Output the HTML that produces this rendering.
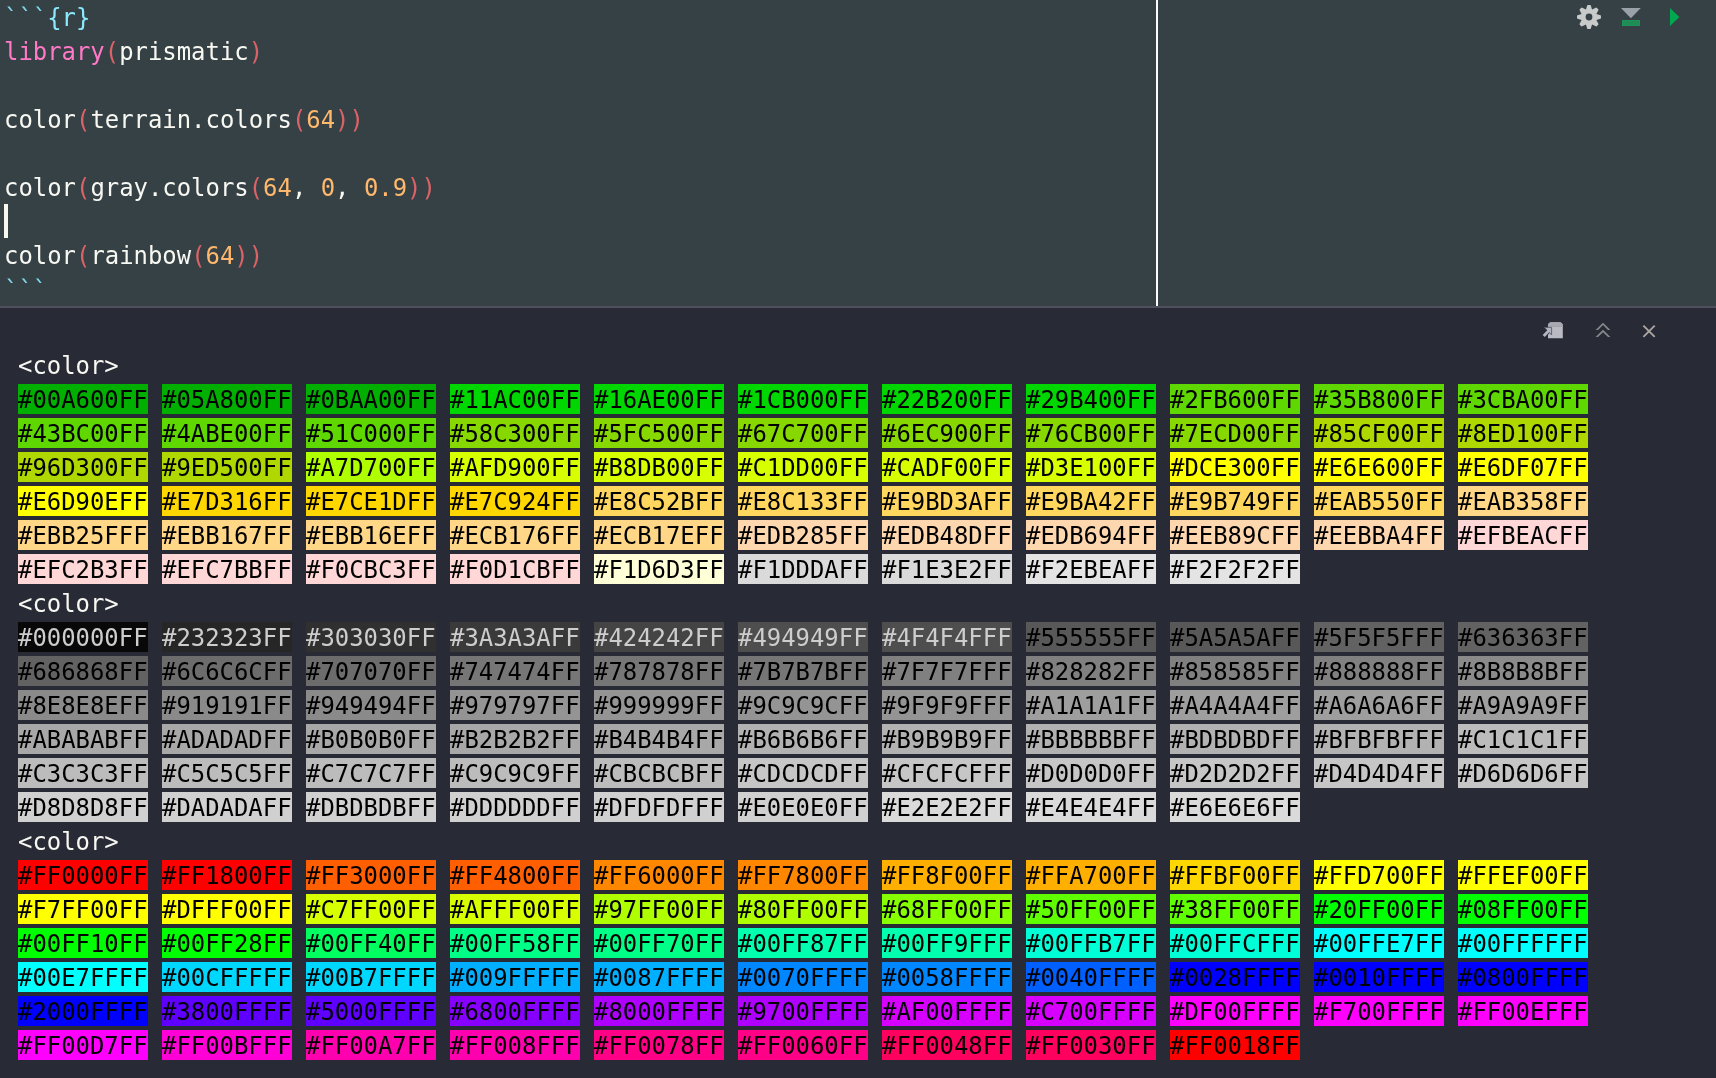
<!DOCTYPE html>
<html><head><meta charset="utf-8"><title>prismatic colors</title>
<style>
html,body{margin:0;padding:0;}
body{width:1716px;height:1078px;overflow:hidden;background:#282a36;position:relative;font-family:"DejaVu Sans Mono","Liberation Mono",monospace;}
#ed{position:absolute;left:0;top:0;width:1716px;height:306px;background:#364146;}
#hl{position:absolute;left:0;top:306px;width:1716px;height:2px;background:#50505c;}
#vl{position:absolute;left:1156px;top:0;width:2px;height:306px;background:#fcfcfc;}
#code{will-change:transform;position:absolute;left:4px;top:1px;margin:0;font-family:"DejaVu Sans Mono","Liberation Mono",monospace;font-size:23.92px;line-height:34px;color:#f8f8f2;white-space:pre;}
#code div{height:34px;}
.k{color:#ff79c6}.p{color:#db6368}.n{color:#ffb86c}.c{color:#8be9fd}.bt{color:#82dcef}
#cur{position:absolute;left:4px;top:204px;width:4px;height:34px;background:#f8f8f0;}
#out{will-change:transform;position:absolute;left:18px;top:349px;font-size:23.92px;line-height:34px;color:#f8f8f2;white-space:nowrap;}
.ln{height:34px;position:relative;}
.s{display:inline-block;box-sizing:border-box;width:130px;height:30px;margin:1px 14px 3px 0;padding-left:0;line-height:32px;color:#000;vertical-align:top;overflow:visible;}
.s.w{color:#cdcdcd}
svg{position:absolute;}
</style></head><body>
<div id="ed"></div><div id="vl"></div><div id="hl"></div>
<div id="code"><div><span class="bt">```</span><span class="c">{r}</span></div><div><span class="k">library</span><span class="p">(</span>prismatic<span class="p">)</span></div><div> </div><div>color<span class="p">(</span>terrain.colors<span class="p">(</span><span class="n">64</span><span class="p">))</span></div><div> </div><div>color<span class="p">(</span>gray.colors<span class="p">(</span><span class="n">64</span>, <span class="n">0</span>, <span class="n">0.9</span><span class="p">))</span></div><div> </div><div>color<span class="p">(</span>rainbow<span class="p">(</span><span class="n">64</span><span class="p">))</span></div><div><span class="bt">```</span></div></div>
<div id="cur"></div>
<svg id="gear" style="left:1571.7px;top:0px" width="34" height="34" viewBox="-17 -17 34 34"><g fill="#c9cbcb" stroke="#c9cbcb" stroke-width="1.5" stroke-linejoin="round"><circle r="7.7" stroke="none"/><polygon points="-2.3,-7.2 -1.1,-11.2 1.1,-11.2 2.3,-7.2"/><polygon points="-2.3,-7.2 -1.1,-11.2 1.1,-11.2 2.3,-7.2" transform="rotate(45)"/><polygon points="-2.3,-7.2 -1.1,-11.2 1.1,-11.2 2.3,-7.2" transform="rotate(90)"/><polygon points="-2.3,-7.2 -1.1,-11.2 1.1,-11.2 2.3,-7.2" transform="rotate(135)"/><polygon points="-2.3,-7.2 -1.1,-11.2 1.1,-11.2 2.3,-7.2" transform="rotate(180)"/><polygon points="-2.3,-7.2 -1.1,-11.2 1.1,-11.2 2.3,-7.2" transform="rotate(225)"/><polygon points="-2.3,-7.2 -1.1,-11.2 1.1,-11.2 2.3,-7.2" transform="rotate(270)"/><polygon points="-2.3,-7.2 -1.1,-11.2 1.1,-11.2 2.3,-7.2" transform="rotate(315)"/></g><circle r="3.4" fill="#364146"/></svg>
<svg style="left:1616px;top:4px" width="30" height="26" viewBox="1616 4 30 26"><polygon points="1621,8 1640.8,8 1630.9,18.2" fill="#9aa1a8"/><rect x="1622.5" y="20.5" width="17" height="5" fill="#208c55" stroke="#1e9357" stroke-width="1"/></svg>
<svg style="left:1666px;top:4px" width="18" height="26" viewBox="1666 4 18 26"><polygon points="1670,8 1679.3,17 1670,26.1" fill="#00a950"/></svg>
<svg style="left:1538px;top:316px" width="30" height="28" viewBox="1538 316 30 28"><path d="M1548 338.2 V325.8 a3.6 3.6 0 0 1 3.6 -3.6 h7.6 a3.6 3.6 0 0 1 3.6 3.6 V338.2 Z" fill="#b9bac2"/><path d="M1548 326.4 V325.8 a3.6 3.6 0 0 1 3.6 -3.6 h7.6 a3.6 3.6 0 0 1 3.6 3.6 V326.4 Z" fill="#a9aab1"/><rect x="1548" y="326.2" width="14.8" height="0.8" fill="#9fa0a8"/><path d="M1543.6 336 L1549.2 330.2" stroke="#282a36" stroke-width="4.6" fill="none"/><path d="M1544.4 327.4 h7.2 v7.6 z" fill="#b3b4c2" stroke="#5a5b68" stroke-width="0.9" stroke-linejoin="miter"/><path d="M1543.7 336 L1549.2 330.2" stroke="#b3b4c2" stroke-width="2.9" fill="none"/></svg>
<svg style="left:1592px;top:318px" width="22" height="24" viewBox="1592 318 22 24"><g fill="#87878c"><polygon points="1603,322.7 1610.4,330 1608,330 1603,325.1 1598,330 1595.6,330"/><polygon points="1603,329.8 1610.4,337.1 1608,337.1 1603,332.2 1598,337.1 1595.6,337.1"/></g></svg>
<svg style="left:1638px;top:320px" width="22" height="22" viewBox="1638 320 22 22"><path d="M1643.4 325.6 L1654.7 336.8 M1654.7 325.6 L1643.4 336.8" fill="none" stroke="#aaa5a0" stroke-width="1.9"/></svg>

<div id="out">
<div class="ln">&lt;color&gt;</div>
<div class="ln"><span class="s" style="background:#00af00">#00A600FF</span><span class="s" style="background:#00af00">#05A800FF</span><span class="s" style="background:#00af00">#0BAA00FF</span><span class="s" style="background:#00d700">#11AC00FF</span><span class="s" style="background:#00d700">#16AE00FF</span><span class="s" style="background:#00d700">#1CB000FF</span><span class="s" style="background:#00d700">#22B200FF</span><span class="s" style="background:#00d700">#29B400FF</span><span class="s" style="background:#5fd700">#2FB600FF</span><span class="s" style="background:#5fd700">#35B800FF</span><span class="s" style="background:#5fd700">#3CBA00FF</span></div>
<div class="ln"><span class="s" style="background:#5fd700">#43BC00FF</span><span class="s" style="background:#5fd700">#4ABE00FF</span><span class="s" style="background:#5fd700">#51C000FF</span><span class="s" style="background:#87d700">#58C300FF</span><span class="s" style="background:#87d700">#5FC500FF</span><span class="s" style="background:#87d700">#67C700FF</span><span class="s" style="background:#87d700">#6EC900FF</span><span class="s" style="background:#87d700">#76CB00FF</span><span class="s" style="background:#87d700">#7ECD00FF</span><span class="s" style="background:#afd700">#85CF00FF</span><span class="s" style="background:#afd700">#8ED100FF</span></div>
<div class="ln"><span class="s" style="background:#afd700">#96D300FF</span><span class="s" style="background:#afd700">#9ED500FF</span><span class="s" style="background:#afff00">#A7D700FF</span><span class="s" style="background:#d7ff00">#AFD900FF</span><span class="s" style="background:#d7ff00">#B8DB00FF</span><span class="s" style="background:#d7ff00">#C1DD00FF</span><span class="s" style="background:#d7ff00">#CADF00FF</span><span class="s" style="background:#d7ff00">#D3E100FF</span><span class="s" style="background:#ffff00">#DCE300FF</span><span class="s" style="background:#ffff00">#E6E600FF</span><span class="s" style="background:#ffff00">#E6DF07FF</span></div>
<div class="ln"><span class="s" style="background:#ffff00">#E6D90EFF</span><span class="s" style="background:#ffd700">#E7D316FF</span><span class="s" style="background:#ffd700">#E7CE1DFF</span><span class="s" style="background:#ffd700">#E7C924FF</span><span class="s" style="background:#ffd75f">#E8C52BFF</span><span class="s" style="background:#ffd75f">#E8C133FF</span><span class="s" style="background:#ffd75f">#E9BD3AFF</span><span class="s" style="background:#ffd75f">#E9BA42FF</span><span class="s" style="background:#ffd75f">#E9B749FF</span><span class="s" style="background:#ffd75f">#EAB550FF</span><span class="s" style="background:#ffd787">#EAB358FF</span></div>
<div class="ln"><span class="s" style="background:#ffd787">#EBB25FFF</span><span class="s" style="background:#ffd787">#EBB167FF</span><span class="s" style="background:#ffd787">#EBB16EFF</span><span class="s" style="background:#ffd787">#ECB176FF</span><span class="s" style="background:#ffd787">#ECB17EFF</span><span class="s" style="background:#ffd7af">#EDB285FF</span><span class="s" style="background:#ffd7af">#EDB48DFF</span><span class="s" style="background:#ffd7af">#EDB694FF</span><span class="s" style="background:#ffd7af">#EEB89CFF</span><span class="s" style="background:#ffd7af">#EEBBA4FF</span><span class="s" style="background:#ffd7d7">#EFBEACFF</span></div>
<div class="ln"><span class="s" style="background:#ffd7d7">#EFC2B3FF</span><span class="s" style="background:#ffd7d7">#EFC7BBFF</span><span class="s" style="background:#ffd7d7">#F0CBC3FF</span><span class="s" style="background:#ffd7d7">#F0D1CBFF</span><span class="s" style="background:#ffffd7">#F1D6D3FF</span><span class="s" style="background:#dadada">#F1DDDAFF</span><span class="s" style="background:#dadada">#F1E3E2FF</span><span class="s" style="background:#e4e4e4">#F2EBEAFF</span><span class="s" style="background:#e4e4e4">#F2F2F2FF</span></div>
<div class="ln">&lt;color&gt;</div>
<div class="ln"><span class="s w" style="background:#080808">#000000FF</span><span class="s w" style="background:#262626">#232323FF</span><span class="s w" style="background:#303030">#303030FF</span><span class="s w" style="background:#3a3a3a">#3A3A3AFF</span><span class="s w" style="background:#444444">#424242FF</span><span class="s w" style="background:#4e4e4e">#494949FF</span><span class="s w" style="background:#4e4e4e">#4F4F4FFF</span><span class="s" style="background:#585858">#555555FF</span><span class="s" style="background:#585858">#5A5A5AFF</span><span class="s" style="background:#626262">#5F5F5FFF</span><span class="s" style="background:#626262">#636363FF</span></div>
<div class="ln"><span class="s" style="background:#626262">#686868FF</span><span class="s" style="background:#6c6c6c">#6C6C6CFF</span><span class="s" style="background:#6c6c6c">#707070FF</span><span class="s" style="background:#767676">#747474FF</span><span class="s" style="background:#767676">#787878FF</span><span class="s" style="background:#767676">#7B7B7BFF</span><span class="s" style="background:#808080">#7F7F7FFF</span><span class="s" style="background:#808080">#828282FF</span><span class="s" style="background:#808080">#858585FF</span><span class="s" style="background:#808080">#888888FF</span><span class="s" style="background:#8a8a8a">#8B8B8BFF</span></div>
<div class="ln"><span class="s" style="background:#8a8a8a">#8E8E8EFF</span><span class="s" style="background:#8a8a8a">#919191FF</span><span class="s" style="background:#8a8a8a">#949494FF</span><span class="s" style="background:#949494">#979797FF</span><span class="s" style="background:#949494">#999999FF</span><span class="s" style="background:#949494">#9C9C9CFF</span><span class="s" style="background:#949494">#9F9F9FFF</span><span class="s" style="background:#9e9e9e">#A1A1A1FF</span><span class="s" style="background:#9e9e9e">#A4A4A4FF</span><span class="s" style="background:#9e9e9e">#A6A6A6FF</span><span class="s" style="background:#9e9e9e">#A9A9A9FF</span></div>
<div class="ln"><span class="s" style="background:#a8a8a8">#ABABABFF</span><span class="s" style="background:#a8a8a8">#ADADADFF</span><span class="s" style="background:#a8a8a8">#B0B0B0FF</span><span class="s" style="background:#a8a8a8">#B2B2B2FF</span><span class="s" style="background:#a8a8a8">#B4B4B4FF</span><span class="s" style="background:#b2b2b2">#B6B6B6FF</span><span class="s" style="background:#b2b2b2">#B9B9B9FF</span><span class="s" style="background:#b2b2b2">#BBBBBBFF</span><span class="s" style="background:#b2b2b2">#BDBDBDFF</span><span class="s" style="background:#b2b2b2">#BFBFBFFF</span><span class="s" style="background:#bcbcbc">#C1C1C1FF</span></div>
<div class="ln"><span class="s" style="background:#bcbcbc">#C3C3C3FF</span><span class="s" style="background:#bcbcbc">#C5C5C5FF</span><span class="s" style="background:#bcbcbc">#C7C7C7FF</span><span class="s" style="background:#bcbcbc">#C9C9C9FF</span><span class="s" style="background:#bcbcbc">#CBCBCBFF</span><span class="s" style="background:#c6c6c6">#CDCDCDFF</span><span class="s" style="background:#c6c6c6">#CFCFCFFF</span><span class="s" style="background:#c6c6c6">#D0D0D0FF</span><span class="s" style="background:#c6c6c6">#D2D2D2FF</span><span class="s" style="background:#c6c6c6">#D4D4D4FF</span><span class="s" style="background:#c6c6c6">#D6D6D6FF</span></div>
<div class="ln"><span class="s" style="background:#d0d0d0">#D8D8D8FF</span><span class="s" style="background:#d0d0d0">#DADADAFF</span><span class="s" style="background:#d0d0d0">#DBDBDBFF</span><span class="s" style="background:#d0d0d0">#DDDDDDFF</span><span class="s" style="background:#d0d0d0">#DFDFDFFF</span><span class="s" style="background:#d0d0d0">#E0E0E0FF</span><span class="s" style="background:#dadada">#E2E2E2FF</span><span class="s" style="background:#dadada">#E4E4E4FF</span><span class="s" style="background:#dadada">#E6E6E6FF</span></div>
<div class="ln">&lt;color&gt;</div>
<div class="ln"><span class="s" style="background:#ff0000">#FF0000FF</span><span class="s" style="background:#ff0000">#FF1800FF</span><span class="s" style="background:#ff5f00">#FF3000FF</span><span class="s" style="background:#ff5f00">#FF4800FF</span><span class="s" style="background:#ff8700">#FF6000FF</span><span class="s" style="background:#ff8700">#FF7800FF</span><span class="s" style="background:#ffaf00">#FF8F00FF</span><span class="s" style="background:#ffaf00">#FFA700FF</span><span class="s" style="background:#ffd700">#FFBF00FF</span><span class="s" style="background:#ffff00">#FFD700FF</span><span class="s" style="background:#ffff00">#FFEF00FF</span></div>
<div class="ln"><span class="s" style="background:#ffff00">#F7FF00FF</span><span class="s" style="background:#ffff00">#DFFF00FF</span><span class="s" style="background:#d7ff00">#C7FF00FF</span><span class="s" style="background:#d7ff00">#AFFF00FF</span><span class="s" style="background:#afff00">#97FF00FF</span><span class="s" style="background:#afff00">#80FF00FF</span><span class="s" style="background:#87ff00">#68FF00FF</span><span class="s" style="background:#5fff00">#50FF00FF</span><span class="s" style="background:#5fff00">#38FF00FF</span><span class="s" style="background:#00ff00">#20FF00FF</span><span class="s" style="background:#00ff00">#08FF00FF</span></div>
<div class="ln"><span class="s" style="background:#00ff00">#00FF10FF</span><span class="s" style="background:#00ff00">#00FF28FF</span><span class="s" style="background:#00ff5f">#00FF40FF</span><span class="s" style="background:#00ff87">#00FF58FF</span><span class="s" style="background:#00ff87">#00FF70FF</span><span class="s" style="background:#00ffaf">#00FF87FF</span><span class="s" style="background:#00ffaf">#00FF9FFF</span><span class="s" style="background:#00ffd7">#00FFB7FF</span><span class="s" style="background:#00ffd7">#00FFCFFF</span><span class="s" style="background:#00ffff">#00FFE7FF</span><span class="s" style="background:#00ffff">#00FFFFFF</span></div>
<div class="ln"><span class="s" style="background:#00ffff">#00E7FFFF</span><span class="s" style="background:#00d7ff">#00CFFFFF</span><span class="s" style="background:#00d7ff">#00B7FFFF</span><span class="s" style="background:#00afff">#009FFFFF</span><span class="s" style="background:#00afff">#0087FFFF</span><span class="s" style="background:#0087ff">#0070FFFF</span><span class="s" style="background:#0087ff">#0058FFFF</span><span class="s" style="background:#005fff">#0040FFFF</span><span class="s" style="background:#0000ff">#0028FFFF</span><span class="s" style="background:#0000ff">#0010FFFF</span><span class="s" style="background:#0000ff">#0800FFFF</span></div>
<div class="ln"><span class="s" style="background:#0000ff">#2000FFFF</span><span class="s" style="background:#5f00ff">#3800FFFF</span><span class="s" style="background:#5f00ff">#5000FFFF</span><span class="s" style="background:#8700ff">#6800FFFF</span><span class="s" style="background:#af00ff">#8000FFFF</span><span class="s" style="background:#af00ff">#9700FFFF</span><span class="s" style="background:#d700ff">#AF00FFFF</span><span class="s" style="background:#d700ff">#C700FFFF</span><span class="s" style="background:#ff00ff">#DF00FFFF</span><span class="s" style="background:#ff00ff">#F700FFFF</span><span class="s" style="background:#ff00ff">#FF00EFFF</span></div>
<div class="ln"><span class="s" style="background:#ff00ff">#FF00D7FF</span><span class="s" style="background:#ff00d7">#FF00BFFF</span><span class="s" style="background:#ff00af">#FF00A7FF</span><span class="s" style="background:#ff00af">#FF008FFF</span><span class="s" style="background:#ff0087">#FF0078FF</span><span class="s" style="background:#ff0087">#FF0060FF</span><span class="s" style="background:#ff005f">#FF0048FF</span><span class="s" style="background:#ff005f">#FF0030FF</span><span class="s" style="background:#ff0000">#FF0018FF</span></div>
</div>
</body></html>
